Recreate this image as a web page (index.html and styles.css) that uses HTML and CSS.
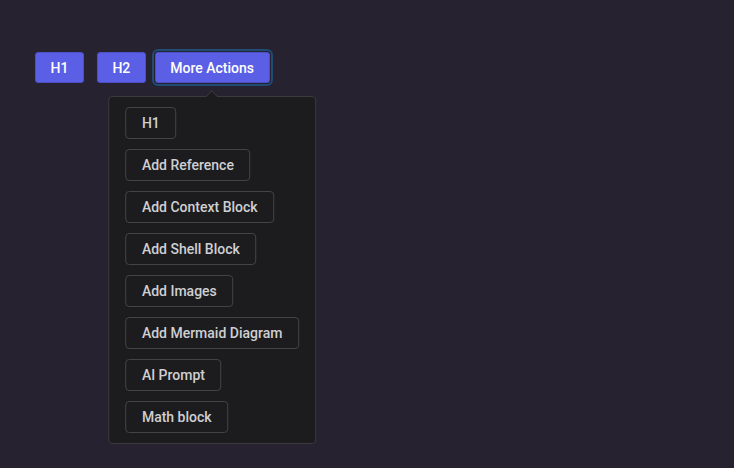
FILE: index.html
```html
<!DOCTYPE html>
<html>
<head>
<meta charset="utf-8">
<link rel="stylesheet" href="styles.css">
</head>
<body>
<div class="toolbar">
  <button class="btn">H1</button>
  <button class="btn">H2</button>
  <div class="menu-wrap">
    <button class="btn btn-focus">More Actions</button>
    <div class="dropdown">
      <span class="arrow"></span>
      <button class="item">H1</button>
      <button class="item">Add Reference</button>
      <button class="item">Add Context Block</button>
      <button class="item">Add Shell Block</button>
      <button class="item">Add Images</button>
      <button class="item">Add Mermaid Diagram</button>
      <button class="item">AI Prompt</button>
      <button class="item">Math block</button>
    </div>
  </div>
</div>
</body>
</html>
```
FILE: styles.css
```css
html, body {
  margin: 0;
  height: 100%;
  background: #26222f;
  font-family: Roboto, "Noto Sans", sans-serif;
}
.toolbar {
  display: flex;
  align-items: flex-start;
  padding: 52px 35px;
}
.btn {
  height: 31px;
  padding: 0 14.5px;
  margin-right: 13px;
  background: #5b5fe6;
  border: 1px solid #4d50c4;
  border-radius: 3px;
  color: #ffffff;
  font-family: inherit;
  font-size: 14px;
  font-weight: 500;
  cursor: pointer;
}
.menu-wrap {
  position: relative;
  margin-left: -4px;
}
.btn-focus {
  margin-right: 0;
  outline: 2px solid #1f4c75;
  outline-offset: 1px;
}
.dropdown {
  position: absolute;
  top: 44px;
  left: 50%;
  transform: translateX(-50%);
  display: flex;
  flex-direction: column;
  align-items: flex-start;
  gap: 10px;
  padding: 10px 16px;
  background: #1c1c1e;
  border: 1px solid #3b3b3e;
  border-radius: 4px;
  white-space: nowrap;
}
.arrow {
  position: absolute;
  top: -5px;
  left: 50%;
  width: 8px;
  height: 8px;
  margin-left: -5px;
  background: #1c1c1e;
  border-left: 1px solid #3b3b3e;
  border-top: 1px solid #3b3b3e;
  transform: rotate(45deg);
}
.item {
  height: 32px;
  padding: 0 15.5px;
  background: #1c1c1e;
  border: 1px solid #444447;
  border-radius: 4px;
  color: #cfcfd2;
  font-family: inherit;
  font-size: 14px;
  font-weight: 500;
  cursor: pointer;
}
```
